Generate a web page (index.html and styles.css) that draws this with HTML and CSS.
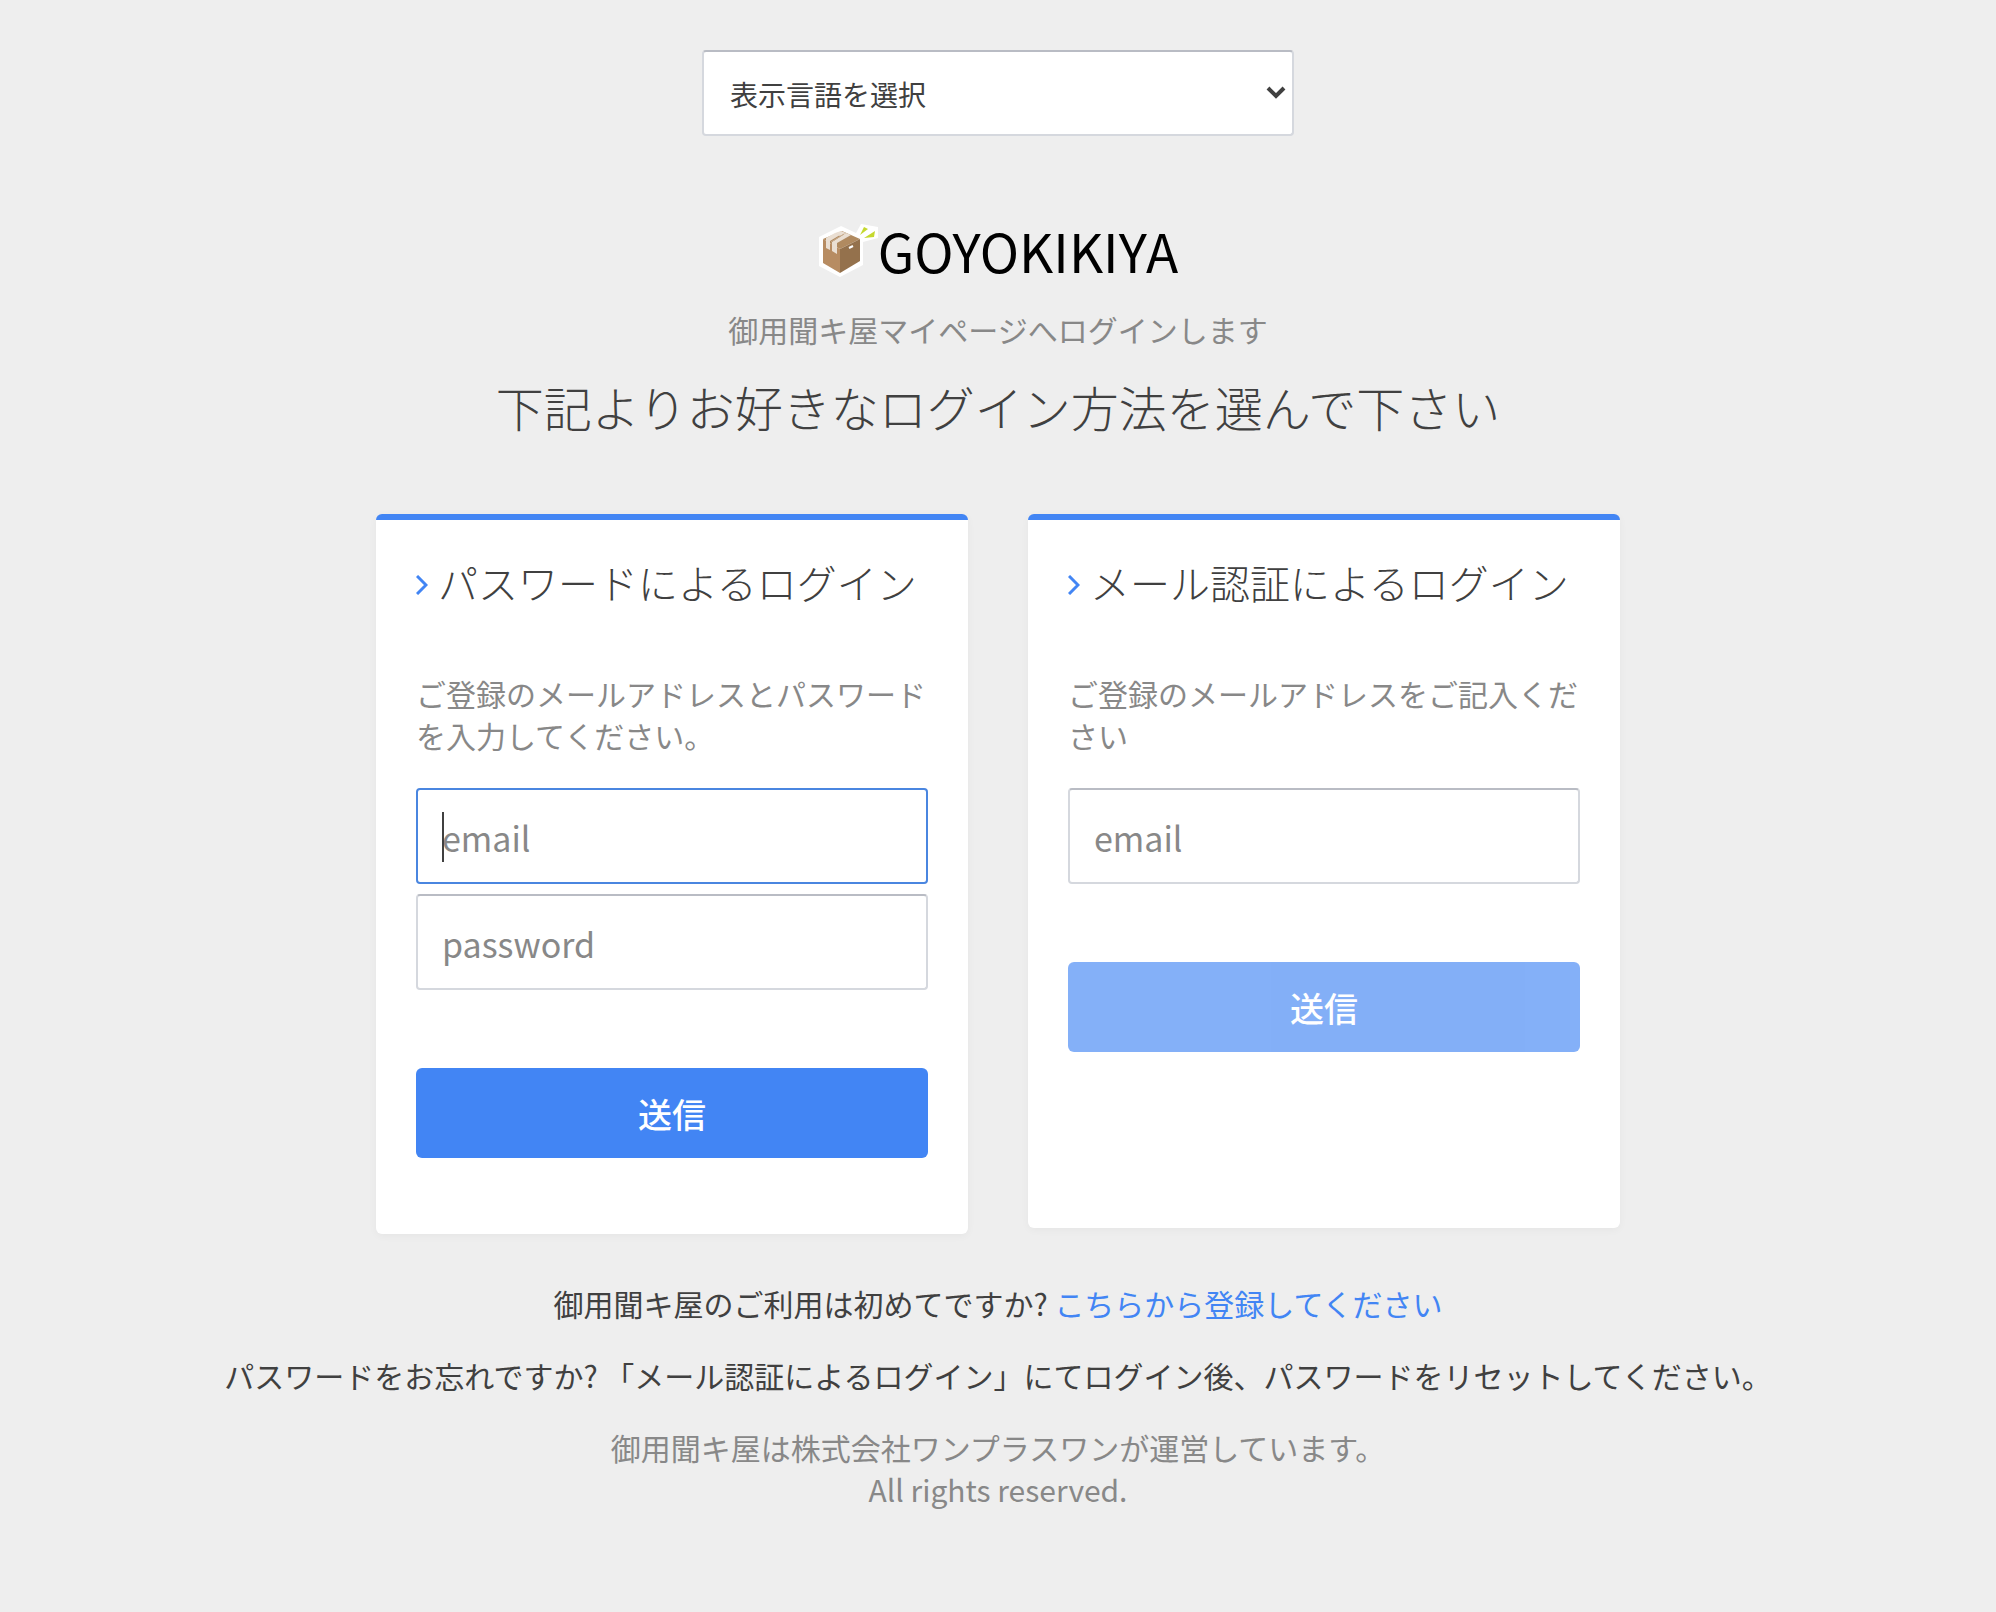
FILE: index.html
```html
<!DOCTYPE html>
<html lang="ja">
<head>
    <meta charset="UTF-8">
    <meta name="viewport" content="width=device-width, initial-scale=1.0">
    <title>GOYOKIKIYA ログイン</title>
    <link rel="stylesheet" href="styles.css">
</head>
<body>
    <div class="language">
        <select class="field language-select" aria-label="表示言語を選択">
            <option>表示言語を選択</option>
            <option>日本語</option>
            <option>English</option>
        </select>
        <svg class="language-arrow" viewBox="0 0 20 14" aria-hidden="true"><path d="M2 2 10 10 18 2"/></svg>
    </div>

    <header class="header">
        <a href="/" class="logo">
            <svg class="logo-icon" viewBox="0 0 60 54" aria-hidden="true">
                <path fill="#fff" d="M23 3 38 10 43 1 60 4 60 15 45 19 45 42 22 54 1 43 1 14z"/>
                <path fill="#b08a60" d="M24 8 42 16 22 26 5 16z"/>
                <path fill="#b78c62" d="M5 16 22 26V50L5 40z"/>
                <path fill="#94714c" d="M42 16 22 26V50L42 38z"/>
                <path fill="#eadfd3" d="M8 15 17 10 22 12 12 18V27L8 25zM14 19 28 10 33 12 19 20V31L14 28z"/>
                <path fill="#eadfd3" d="M17 10 23 8 28 10 22 13z"/>
                <path stroke="#c9ad8f" d="M13 19 26 11" fill="none"/>
                <path stroke="#fff" stroke-width="2" d="M31 25 35 23"/>
                <path fill="#c5d82e" d="M42 12 46 4 50 6zM46 15 57 8 56 14z"/>
            </svg>
            <span>GOYOKIKIYA</span>
        </a>
        <p class="muted">御用聞キ屋マイページへログインします</p>
        <h1>下記よりお好きなログイン方法を選んで下さい</h1>
    </header>

    <main class="cards">
        <form class="card">
            <h2>
                <svg class="chevron" viewBox="0 0 12 20" aria-hidden="true"><path d="M1 1 10 10 1 19"/></svg>
                パスワードによるログイン
            </h2>
            <p class="muted">ご登録のメールアドレスとパスワードを入力してください。</p>
            <div class="caret-field">
                <input class="field" type="email" placeholder="email" aria-label="email" autofocus>
            </div>
            <input class="field" type="password" placeholder="password" aria-label="password">
            <button class="submit" type="submit">送信</button>
        </form>

        <form class="card">
            <h2>
                <svg class="chevron" viewBox="0 0 12 20" aria-hidden="true"><path d="M1 1 10 10 1 19"/></svg>
                メール認証によるログイン
            </h2>
            <p class="muted">ご登録のメールアドレスをご記入ください</p>
            <input class="field" type="email" placeholder="email" aria-label="email">
            <button class="submit" type="submit" disabled>送信</button>
        </form>
    </main>

    <footer class="footer">
        <p>御用聞キ屋のご利用は初めてですか? <a href="/register">こちらから登録してください</a></p>
        <p>パスワードをお忘れですか? 「メール認証によるログイン」にてログイン後、パスワードをリセットしてください。</p>
        <p class="muted">御用聞キ屋は株式会社ワンプラスワンが運営しています。<br>All rights reserved.</p>
    </footer>
</body>
</html>
```
FILE: styles.css
```css
* {
    box-sizing: border-box;
}
body {
    margin: 0;
    padding: 50px 20px;
    background-color: #eee;
    color: #404040;
    font-family: "Noto Sans CJK JP", sans-serif;
    font-size: 30px;
    line-height: 42px;
    text-align: center;
}
h1, h2, p {
    margin: 0;
}
h1, h2 {
    font-weight: 300;
}
a {
    color: #4285f4;
    text-decoration: none;
}
.muted {
    color: #888;
}

/* Form controls */
.field {
    display: block;
    width: 100%;
    height: 96px;
    padding: 2px 24px 0;
    border: 2px solid #d5d8de;
    border-top-color: #b9bcc4;
    border-radius: 4px;
    background-color: #fff;
    color: #404040;
    font-family: inherit;
    font-size: 34px;
}
.field::placeholder {
    color: #888;
    opacity: 1;
}
.field:focus {
    border-color: #4a86e0;
    outline: none;
}
.caret-field {
    position: relative;
    margin-bottom: 10px;
}
.caret-field .field {
    caret-color: transparent;
}
.caret-field:focus-within::after {
    content: "";
    position: absolute;
    top: 24px;
    left: 26px;
    width: 2px;
    height: 50px;
    background-color: #404040;
}
.submit {
    display: block;
    width: 100%;
    height: 90px;
    margin-top: 78px;
    border: none;
    border-radius: 6px;
    background-color: #4285f4;
    color: #fff;
    font-family: inherit;
    font-size: 34px;
    font-weight: 500;
    cursor: pointer;
}
.submit:disabled {
    opacity: 0.65;
    cursor: default;
}

/* Language */
.language {
    position: relative;
    max-width: 592px;
    margin: 0 auto;
}
.language-select {
    height: 86px;
    padding: 2px 26px 0;
    font-size: 28px;
    appearance: none;
}
.language-arrow {
    position: absolute;
    top: 36px;
    right: 8px;
    width: 20px;
    height: 14px;
    fill: none;
    stroke: #404040;
    stroke-width: 4;
    pointer-events: none;
}

/* Header */
.header {
    padding-top: 80px;
}
.logo {
    display: flex;
    align-items: center;
    justify-content: center;
    height: 68px;
    color: #000;
    font-size: 53px;
}
.logo-icon {
    width: 60px;
    height: 54px;
}
.header .muted {
    margin-top: 24px;
}
h1 {
    margin-top: 20px;
    font-size: 48px;
    line-height: 72px;
}

/* Cards */
.cards {
    display: flex;
    flex-wrap: wrap;
    align-items: flex-start;
    justify-content: center;
    gap: 60px;
    margin-top: 72px;
}
.card {
    width: 592px;
    min-height: 714px;
    padding: 32px 40px 76px;
    border-top: 6px solid #4285f4;
    border-radius: 6px;
    background-color: #fff;
    box-shadow: 0 2px 8px rgba(0,0,0,0.04);
    text-align: left;
}
.card h2 {
    display: flex;
    align-items: center;
    gap: 10px;
    margin-bottom: 60px;
    font-size: 40px;
    line-height: 60px;
}
.card .muted {
    margin-bottom: 32px;
}
.chevron {
    width: 12px;
    height: 20px;
    margin-top: 6px;
    fill: none;
    stroke: #4285f4;
    stroke-width: 3;
}

/* Footer */
.footer {
    display: grid;
    gap: 30px;
    margin-top: 48px;
}
```
